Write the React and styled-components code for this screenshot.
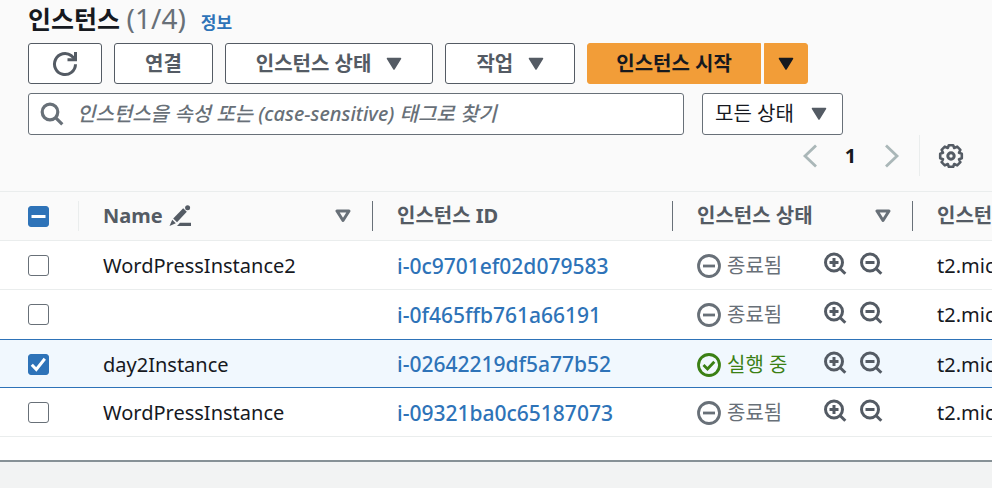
import { useState } from "react";
import styled, { createGlobalStyle, css } from "styled-components";

const initialInstances = [
  { id: "i-0c9701ef02d079583", name: "WordPressInstance2", running: false, type: "t2.micro" },
  { id: "i-0f465ffb761a66191", name: "", running: false, type: "t2.micro" },
  { id: "i-02642219df5a77b52", name: "day2Instance", running: true, type: "t2.micro" },
  { id: "i-09321ba0c65187073", name: "WordPressInstance", running: false, type: "t2.micro" },
];

const Caret = () => (
  <svg width="16" height="14" viewBox="0 0 16 14" aria-hidden="true">
    <path d="M1.5 1.5h13L8 12z" fill="currentColor" stroke="currentColor" strokeWidth="1.5" strokeLinejoin="round" />
  </svg>
);

const SortIcon = () => (
  <svg width="16" height="14" viewBox="0 0 16 14" aria-hidden="true">
    <path d="M2 2h12L8 11.5z" fill="none" stroke="currentColor" strokeWidth="3" strokeLinejoin="round" />
  </svg>
);

const RefreshIcon = () => (
  <svg width="26" height="26" viewBox="0 0 26 26" fill="none" stroke="currentColor" strokeWidth="3" aria-hidden="true">
    <path d="M23.5 13.2A10.5 10.5 0 1 1 19.5 4.8L23 8" />
    <path d="M23.5 1v7.800H15.500" />
  </svg>
);

const SearchIcon = () => (
  <svg width="24" height="24" viewBox="0 0 24 24" fill="none" stroke="currentColor" strokeWidth="3.2" aria-hidden="true">
    <circle cx="10" cy="10" r="7.8" />
    <path d="M15.3 15.3l7 7" />
  </svg>
);

const ZoomIcon = ({ plus }) => (
  <svg width="24" height="24" viewBox="0 0 24 24" fill="none" stroke="currentColor" strokeWidth="3" aria-hidden="true">
    <circle cx="11" cy="10.5" r="8.5" />
    <path d={plus ? "M6.5 10.5h9M11 6v9" : "M6.5 10.5h9"} />
    <path d="M17 16.5l5.3 5.3" />
  </svg>
);

const EditIcon = () => (
  <svg width="22" height="22" viewBox="0 0 22 22" fill="currentColor" aria-hidden="true">
    <path d="M14.2 3.2l3.6 3.6L8 17.2 4.2 13.6z" />
    <path d="M3.2 14.7l3.6 3.5L.5 21z" />
    <circle cx="18.6" cy="2.8" r="2.5" />
    <path d="M11 17.8h11V21H8z" />
  </svg>
);

const GearIcon = () => (
  <svg width="26" height="26" viewBox="0 0 26 26" fill="none" stroke="currentColor" aria-hidden="true">
    <path
      d="M10.8 2.2h4.4l1 2.800 3-1.400 3.200 3.200-1.400 3 2.800 1v4.400l-2.800 1 1.400 3-3.200 3.200-3-1.400-1 2.800h-4.400l-1-2.800-3 1.400-3.200-3.200 1.400-3-2.800-1v-4.400l2.800-1-1.400-3 3.200-3.200 3 1.400z"
      strokeWidth="2.600"
      strokeLinejoin="round"
    />
    <circle cx="13" cy="13" r="3.2" strokeWidth="3" />
  </svg>
);

const StateIcon = ({ running }) => (
  <svg width="24" height="24" viewBox="0 0 24 24" fill="none" stroke="currentColor" strokeWidth="2.8" aria-hidden="true">
    <circle cx="12" cy="12" r="10.5" />
    <path d={running ? "M6.5 12l4 4 6.8-7.3" : "M6 12h12"} />
  </svg>
);

const Arrow = ({ next }) => (
  <svg width="16" height="24" viewBox="0 0 16 24" fill="none" stroke="currentColor" strokeWidth="2.8" aria-hidden="true">
    <path d={next ? "M2 1.5L13 12 2 22.5" : "M14 1.5L3 12l11 10.5"} />
  </svg>
);

const Checkbox = ({ checked, mixed, label, onChange }) => (
  <CheckWrap>
    <CheckInput
      type="checkbox"
      checked={checked}
      onChange={onChange}
      aria-label={label}
      ref={(el) => {
        if (el) el.indeterminate = !!mixed;
      }}
    />
    <svg width="21" height="21" viewBox="0 0 21 21" fill="none" stroke="#fff" strokeWidth="3" aria-hidden="true">
      {mixed ? <path d="M3.5 10.5h14" /> : checked && <path d="M3.8 10.8l4.5 4.7L16.8 4.8" />}
    </svg>
  </CheckWrap>
);

const App = () => {
  const [selected, setSelected] = useState(["i-02642219df5a77b52"]);
  const total = initialInstances.length;
  const all = selected.length === total;

  const toggle = (id) =>
    setSelected((prev) => (prev.includes(id) ? prev.filter((x) => x !== id) : [...prev, id]));

  return (
    <>
      <GlobalStyle />
      <Panel>
        <Header>
          <TitleRow>
            <Title>
              인스턴스 <Count>({selected.length}/{total})</Count>
            </Title>
            <InfoLink href="#info">정보</InfoLink>
          </TitleRow>
          <Toolbar>
            <Button $pad={23} aria-label="새로 고침"><RefreshIcon /></Button>
            <Button>연결</Button>
            <Button>인스턴스 상태 <Caret /></Button>
            <Button>작업 <Caret /></Button>
            <SplitButton>
              <Button $primary $pad={28}>인스턴스 시작</Button>
              <Button $primary $pad={13} aria-label="시작 옵션"><Caret /></Button>
            </SplitButton>
          </Toolbar>
          <Filters>
            <SearchBox>
              <SearchIcon />
              <SearchInput
                type="search"
                aria-label="인스턴스 찾기"
                placeholder="인스턴스을 속성 또는 (case-sensitive) 태그로 찾기"
              />
            </SearchBox>
            <SelectBox>
              <Select aria-label="상태 필터">
                <option>모든 상태</option>
              </Select>
              <Caret />
            </SelectBox>
          </Filters>
          <Pager>
            <PageButton $muted aria-label="이전 페이지"><Arrow /></PageButton>
            <PageButton aria-current="page">1</PageButton>
            <PageButton $muted aria-label="다음 페이지"><Arrow next /></PageButton>
            <Settings>
              <IconButton aria-label="기본 설정"><GearIcon /></IconButton>
            </Settings>
          </Pager>
        </Header>
        <TableScroll>
          <Table>
            <colgroup>
              <Col $width={79} />
              <Col $width={294} />
              <Col $width={300} />
              <Col $width={240} />
              <Col $width={240} />
            </colgroup>
            <thead>
              <tr>
                <HeadCell $light>
                  <HeadInner>
                    <Checkbox
                      label="모두 선택"
                      checked={all}
                      mixed={selected.length > 0 && !all}
                      onChange={() => setSelected(all ? [] : initialInstances.map((i) => i.id))}
                    />
                  </HeadInner>
                </HeadCell>
                <HeadCell>
                  <HeadInner>
                    Name
                    <EditIcon />
                    <SortButton aria-label="Name 정렬"><SortIcon /></SortButton>
                  </HeadInner>
                </HeadCell>
                <HeadCell><HeadInner>인스턴스 ID</HeadInner></HeadCell>
                <HeadCell>
                  <HeadInner>
                    인스턴스 상태
                    <SortButton aria-label="인스턴스 상태 정렬"><SortIcon /></SortButton>
                  </HeadInner>
                </HeadCell>
                <HeadCell><HeadInner>인스턴스 유형</HeadInner></HeadCell>
              </tr>
            </thead>
            <tbody>
              {initialInstances.map((item, index) => {
                const active = selected.includes(item.id);
                const next = initialInstances[index + 1];
                return (
                  <Row key={item.id} $active={active} $beforeActive={next && selected.includes(next.id)}>
                    <Cell>
                      <Checkbox
                        label={`${item.name || item.id} 선택`}
                        checked={active}
                        onChange={() => toggle(item.id)}
                      />
                    </Cell>
                    <Cell>{item.name}</Cell>
                    <Cell>
                      <IdLink href={`#${item.id}`}>{item.id}</IdLink>
                    </Cell>
                    <Cell>
                      <StateRow>
                        <State $running={item.running}>
                          <StateIcon running={item.running} />
                          {item.running ? "실행 중" : "종료됨"}
                        </State>
                        <ZoomGroup>
                          <IconButton aria-label="필터에 포함"><ZoomIcon plus /></IconButton>
                          <IconButton aria-label="필터에서 제외"><ZoomIcon /></IconButton>
                        </ZoomGroup>
                      </StateRow>
                    </Cell>
                    <Cell>{item.type}</Cell>
                  </Row>
                );
              })}
            </tbody>
          </Table>
        </TableScroll>
      </Panel>
    </>
  );
};

export default App;

const GlobalStyle = createGlobalStyle`
  * {
    box-sizing: border-box;
  }
  body {
    margin: 0;
    background: #f2f3f3;
    color: #16191f;
    overflow-x: hidden;
  }
  body, button, input, select {
    font-family: "Noto Sans", "Noto Sans CJK KR", sans-serif;
    font-size: 20px;
    line-height: 28px;
  }
  svg {
    display: block;
    flex: none;
  }
`;

const Panel = styled.main`
  background: #fff;
  padding-bottom: 23px;
  border-bottom: 2px solid #879196;
  box-shadow: 0 1px 1px #d5dbdb;
`;

const Header = styled.header`
  background: #fafafa;
  padding: 0 28px 15px;
`;

const TitleRow = styled.div`
  display: flex;
  align-items: baseline;
  gap: 15px;
  height: 43px;
`;

const Title = styled.h1`
  margin: 0;
  font-size: 25px;
  line-height: 36px;
  font-weight: 700;
`;

const Count = styled.span`
  color: #687078;
  font-size: 28px;
  font-weight: 400;
`;

const InfoLink = styled.a`
  color: #2e73b8;
  font-size: 17px;
  font-weight: 700;
  text-decoration: none;
`;

const Toolbar = styled.div`
  display: flex;
  gap: 12px;
`;

const Button = styled.button`
  display: flex;
  align-items: center;
  justify-content: center;
  gap: 15px;
  height: 41px;
  padding: 0 ${({ $pad = 30 }) => $pad}px;
  border: 1px solid #545b64;
  border-radius: 3px;
  background: #fff;
  color: #545b64;
  font-weight: 700;
  white-space: nowrap;
  cursor: pointer;
  ${({ $primary }) =>
    $primary &&
    css`
      border-color: #f29d38;
      background: #f29d38;
      color: #16191f;
    `}
`;

const SplitButton = styled.div`
  display: flex;
  gap: 3px;
  button:first-child {
    border-radius: 3px 0 0 3px;
  }
  button:last-child {
    border-radius: 0 3px 3px 0;
  }
`;

const Filters = styled.div`
  display: flex;
  gap: 18px;
  margin-top: 9px;
`;

const SearchBox = styled.div`
  display: flex;
  align-items: center;
  gap: 13px;
  flex: 0 1 656px;
  height: 42px;
  padding: 0 11px;
  border: 1px solid #687078;
  border-radius: 3px;
  background: #fff;
  color: #687078;
`;

const SearchInput = styled.input`
  flex: 1;
  min-width: 0;
  padding: 0;
  border: 0;
  outline: 0;
  background: none;
  color: #16191f;
  appearance: none;
  &::placeholder {
    color: #687078;
    font-style: italic;
    font-weight: 500;
    opacity: 1;
  }
`;

const SelectBox = styled.div`
  display: grid;
  align-items: center;
  color: #545b64;
  & > * {
    grid-area: 1 / 1;
  }
  svg {
    justify-self: end;
    margin-right: 16px;
    pointer-events: none;
  }
`;

const Select = styled.select`
  height: 42px;
  padding: 0 48px 0 12px;
  border: 1px solid #687078;
  border-radius: 3px;
  background: #fff;
  color: #16191f;
  appearance: none;
`;

const Pager = styled.nav`
  display: flex;
  align-items: center;
  justify-content: flex-end;
  height: 41px;
`;

const PageButton = styled.button`
  display: flex;
  justify-content: center;
  width: 41px;
  padding: 0;
  border: 0;
  background: none;
  color: ${({ $muted }) => ($muted ? "#aab7b8" : "#16191f")};
  font-weight: 700;
`;

const Settings = styled.div`
  display: flex;
  align-items: center;
  height: 41px;
  margin-left: 7px;
  padding-left: 18px;
  border-left: 1px solid #eaeded;
`;

const IconButton = styled.button`
  padding: 0;
  border: 0;
  background: none;
  color: #545b64;
  cursor: pointer;
`;

const TableScroll = styled.div`
  overflow: hidden;
`;

const Table = styled.table`
  width: 1153px;
  table-layout: fixed;
  border-collapse: separate;
  border-spacing: 0;
`;

const Col = styled.col`
  width: ${({ $width }) => $width}px;
`;

const HeadCell = styled.th`
  height: 50px;
  padding: 0;
  border-top: 1px solid #eaeded;
  border-bottom: 1px solid #eaeded;
  background: #fafafa;
  color: #545b64;
  font-weight: 700;
  text-align: left;
  & > div {
    border-right: 1px solid ${({ $light }) => ($light ? "#eaeded" : "#687078")};
  }
  &:first-child > div {
    padding-left: 28px;
  }
`;

const HeadInner = styled.div`
  display: flex;
  align-items: center;
  gap: 6px;
  height: 30px;
  padding: 0 21px 0 24px;
  white-space: nowrap;
`;

const SortButton = styled(IconButton)`
  margin-left: auto;
  color: #687078;
`;

const Cell = styled.td`
  height: 49px;
  padding: 2px 24px 0;
  border-bottom: 1px solid #eaeded;
  white-space: nowrap;
  &:first-child {
    padding: 1px 0 0 28px;
  }
`;

const Row = styled.tr`
  ${({ $beforeActive }) =>
    $beforeActive &&
    css`
      ${Cell} {
        border-bottom-color: transparent;
      }
    `}
  ${({ $active }) =>
    $active &&
    css`
      ${Cell} {
        border-top: 1px solid #2e73b8;
        border-bottom-color: #2e73b8;
        background: #f1f8fe;
      }
    `}
`;

const IdLink = styled.a`
  color: #2e73b8;
  font-size: 21px;
  font-weight: 500;
  text-decoration: none;
`;

const StateRow = styled.div`
  display: flex;
  align-items: center;
  justify-content: space-between;
  margin-right: 6px;
`;

const State = styled.span`
  display: flex;
  align-items: center;
  gap: 6px;
  color: ${({ $running }) => ($running ? "#3b8014" : "#687078")};
`;

const ZoomGroup = styled.span`
  display: flex;
  gap: 12px;
  padding-bottom: 4px;
`;

const CheckWrap = styled.span`
  display: grid;
  width: 21px;
  height: 21px;
  & > * {
    grid-area: 1 / 1;
  }
  svg {
    pointer-events: none;
  }
`;

const CheckInput = styled.input`
  width: 21px;
  height: 21px;
  margin: 0;
  border: 1px solid #687078;
  border-radius: 3px;
  background: #fff;
  appearance: none;
  &:checked, &:indeterminate {
    border-color: #2e73b8;
    background: #2e73b8;
  }
`;
